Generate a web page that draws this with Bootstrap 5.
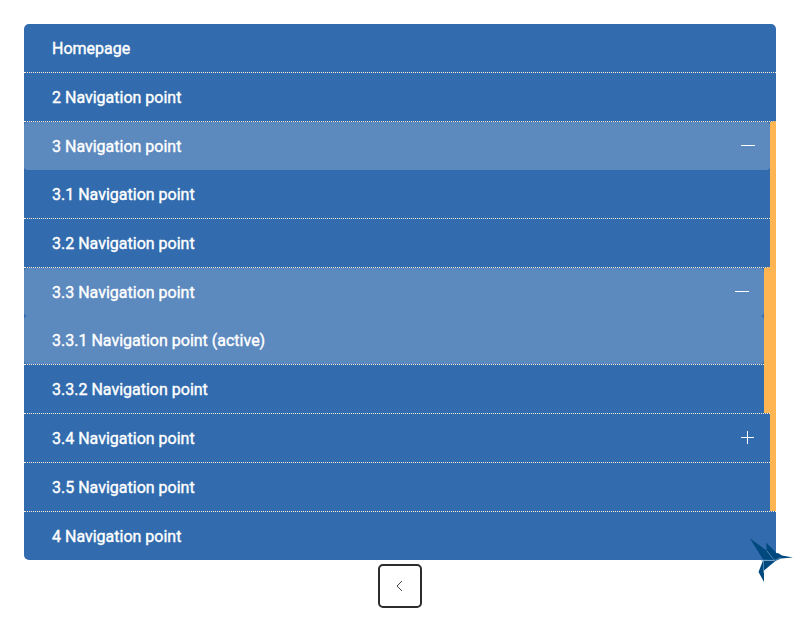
<!DOCTYPE html>
<html lang="en">
<head>
<meta charset="utf-8">
<title>Navigation</title>
<link href="https://cdn.jsdelivr.net/npm/bootstrap@5.3.0/dist/css/bootstrap.min.css" rel="stylesheet">
<style>
body{font-family:Roboto,"Liberation Sans",sans-serif;font-size:16px;color:#fff;background:#fff}
.tree{background:#326cae;border-radius:5px;overflow:hidden}
.tree li+li{border-top:1px dotted #ffeed8}
.tree a{height:48px;padding:1px 28px 0;color:#fff;font-weight:400;line-height:24px;-webkit-text-stroke:.38px #fff}
.tree a svg{margin-top:-1px}
.tree a.lit{background:#5c89be;border-radius:4px;padding-right:15px}
.tree a.toggle{padding-right:15px}
.tree li.opened{border-right:6px solid #ffb551}
.pager{width:44px;height:44px;border:2px solid #2c2c2c;border-radius:5px;background:#fff;margin-top:4px}
.bird{left:750px;top:538px}
</style>
<script src="https://cdn.jsdelivr.net/npm/bootstrap@5.3.0/dist/js/bootstrap.bundle.min.js"></script>
</head>
<body class="p-4 pb-0">
<nav aria-label="Main">
<ul class="tree list-unstyled mb-0">
<li><a href="#" class="d-flex align-items-center text-decoration-none">Homepage</a></li>
<li><a href="#" class="d-flex align-items-center text-decoration-none">2 Navigation point</a></li>
<li class="opened"><a href="#" class="lit d-flex align-items-center justify-content-between text-decoration-none">3 Navigation point
<svg width="14" height="14" stroke="#fff"><path d="M0 6.5H14"/></svg></a>
<ul class="list-unstyled">
<li><a href="#" class="d-flex align-items-center text-decoration-none">3.1 Navigation point</a></li>
<li><a href="#" class="d-flex align-items-center text-decoration-none">3.2 Navigation point</a></li>
<li class="opened"><a href="#" class="lit d-flex align-items-center justify-content-between text-decoration-none">3.3 Navigation point
<svg width="14" height="14" stroke="#fff"><path d="M0 6.5H14"/></svg></a>
<ul class="list-unstyled">
<li><a href="#" class="lit d-flex align-items-center text-decoration-none">3.3.1 Navigation point (active)</a></li>
<li><a href="#" class="d-flex align-items-center text-decoration-none">3.3.2 Navigation point</a></li>
</ul></li>
<li><a href="#" class="toggle d-flex align-items-center justify-content-between text-decoration-none">3.4 Navigation point
<svg width="14" height="14" stroke="#fff"><path d="M0 6.5H13M6.5 0V13"/></svg></a></li>
<li><a href="#" class="d-flex align-items-center text-decoration-none">3.5 Navigation point</a></li>
</ul></li>
<li><a href="#" class="d-flex align-items-center text-decoration-none">4 Navigation point</a></li>
</ul>
</nav>
<div class="d-flex justify-content-center">
<button type="button" class="pager d-flex align-items-center justify-content-center p-0" aria-label="Back">
<svg width="8" height="12" fill="none" stroke="#444" stroke-width="1"><path d="M6 1L1 6L6 11"/></svg>
</button>
</div>
<svg class="bird position-absolute" width="44" height="44" fill="#00497f">
<path d="M0 .5L18 13.500L24 22L13 21.500Z"/>
<path d="M16 4.500L27 15.500L28 22H24L17 13Z"/>
<path d="M22 17.500L28 15L32 17.500L43 19.500L31 20.500L24 23.500L21 20Z"/>
<path d="M13 22.500H26L14 32.500V44L8.500 34Z"/>
<path d="M17 13L24 22M11 22.500H25M13.500 23V35M23 23L31 19.500" stroke="#7fa9cf" stroke-width=".6" fill="none"/>
</svg>
</body>
</html>
